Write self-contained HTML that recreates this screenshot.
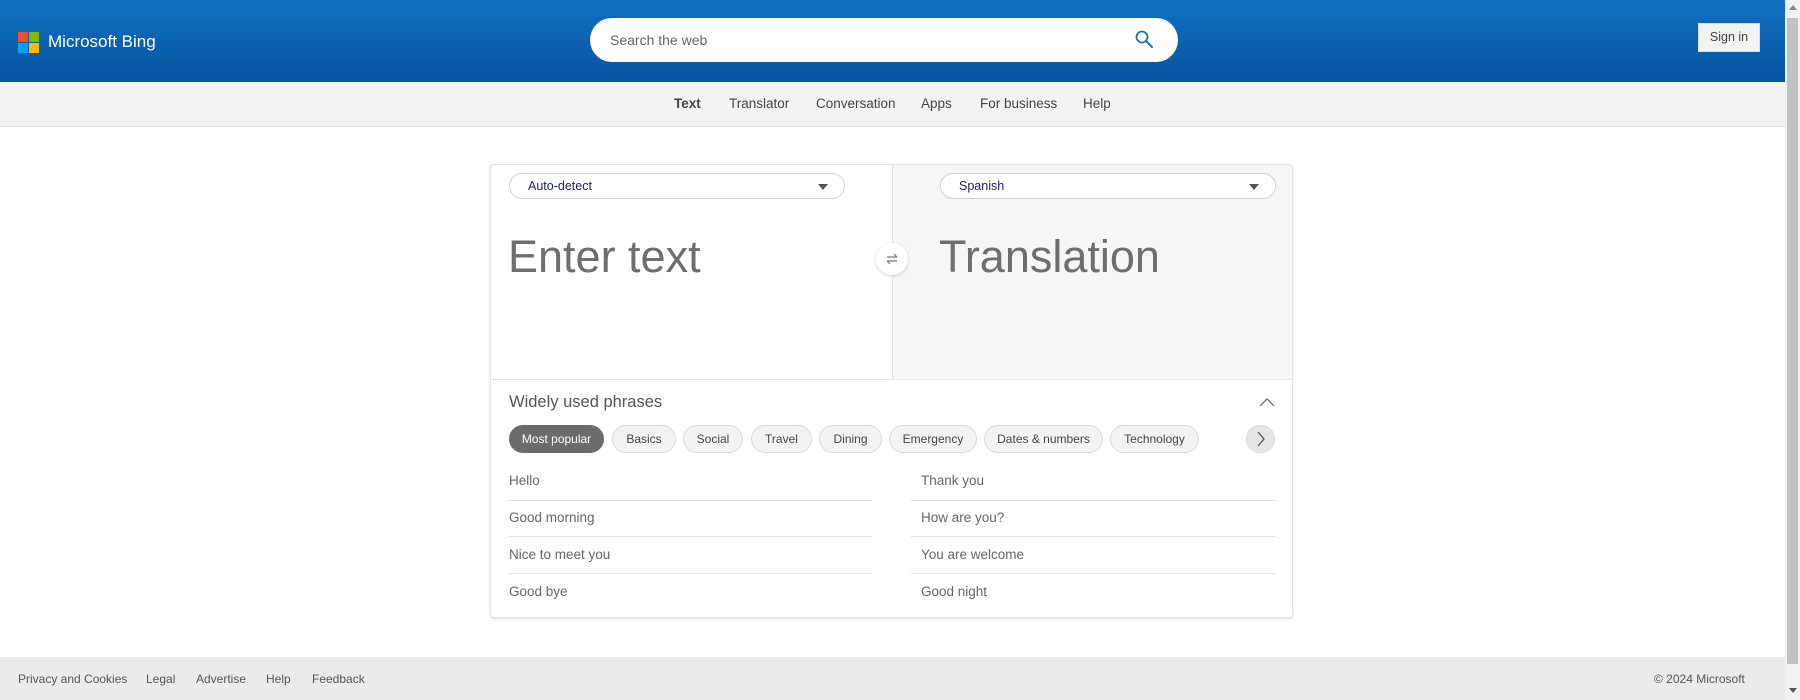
<!DOCTYPE html>
<html><head><meta charset="utf-8"><style>
*{box-sizing:border-box;margin:0;padding:0}
body{width:1800px;height:700px;overflow:hidden;font-family:"Liberation Sans",Arial,sans-serif;background:#fff;position:relative}
.abs{position:absolute}
#hdr{left:0;top:0;width:1785px;height:82px;background:linear-gradient(#1170c2,#0654a0)}
#nav{left:0;top:82px;width:1785px;height:45px;background:#f3f3f3;border-bottom:1px solid #e2e2e2}
.nav{top:96px;font-size:13.5px;color:#444}
#card{left:490px;top:164px;width:803px;height:454px;border:1px solid #e3e3e3;border-radius:4px;box-shadow:0 1px 3px rgba(0,0,0,.12);background:#fff;overflow:hidden}
.dd{height:26px;border:1px solid #d2d2d2;border-radius:13px;background:#fff;font-size:12.5px;color:#1e1e6e;padding:5px 0 0 18px}
.tri{position:absolute;right:16px;top:10px;width:0;height:0;border-left:5px solid transparent;border-right:5px solid transparent;border-top:6px solid #555}
.big{font-size:45px;color:#6e6e6e}
.pill{top:425px;height:28px;border:1px solid #d8d8d8;border-radius:14px;background:#f3f3f3;font-size:12px;color:#444;text-align:center;line-height:26px}
.ph{font-size:13.5px;color:#666}
.sep{height:1px;background:#e3e3e3}
.ft{top:672px;font-size:12px;color:#555}
</style></head><body>
<div id="hdr" class="abs"></div>
<div class="abs" style="left:18px;top:32px;width:10px;height:10px;background:#f25022"></div>
<div class="abs" style="left:29px;top:32px;width:10px;height:10px;background:#7fba00"></div>
<div class="abs" style="left:18px;top:43px;width:10px;height:10px;background:#00a4ef"></div>
<div class="abs" style="left:29px;top:43px;width:10px;height:10px;background:#ffb900"></div>
<div class="abs" style="left:48px;top:32px;font-size:17px;color:#fff">Microsoft Bing</div>
<div class="abs" style="left:590px;top:18px;width:588px;height:44px;background:#fff;border-radius:22px"></div>
<div class="abs" style="left:610px;top:32px;font-size:14px;color:#666">Search the web</div>
<svg class="abs" style="left:1134px;top:29px" width="22" height="22" viewBox="0 0 22 22"><circle cx="8" cy="8" r="5.5" fill="none" stroke="#1a6fb5" stroke-width="1.8"/><path d="M12 12l6 6" stroke="#1a6fb5" stroke-width="2" stroke-linecap="round"/></svg>
<div class="abs" style="left:1698px;top:23px;width:62px;height:29px;background:#f3f3f3;border:1px solid #dcdcdc;font-size:12.5px;color:#444;text-align:center;line-height:27px">Sign in</div>
<div class="abs" style="left:1785px;top:0;width:15px;height:700px;background:#f1f1f1"></div>
<div class="abs" style="left:1787px;top:18px;width:11px;height:646px;background:#c1c1c1"></div>
<div class="abs" style="left:1789px;top:5px;width:0;height:0;border-left:4px solid transparent;border-right:4px solid transparent;border-bottom:5px solid #888"></div>
<div class="abs" style="left:1789px;top:688px;width:0;height:0;border-left:4px solid transparent;border-right:4px solid transparent;border-top:5px solid #555"></div>

<div id="nav" class="abs"></div>
<div class="abs nav" style="left:674px;font-weight:bold">Text</div>
<div class="abs nav" style="left:729px">Translator</div>
<div class="abs nav" style="left:816px">Conversation</div>
<div class="abs nav" style="left:921px">Apps</div>
<div class="abs nav" style="left:980px">For business</div>
<div class="abs nav" style="left:1083px">Help</div>

<div id="card" class="abs">
 <div class="abs" style="left:401px;top:0;width:402px;height:214px;background:#f6f6f6;border-left:1px solid #e6e6e6"></div>
 <div class="abs" style="left:0;top:214px;width:803px;height:1px;background:#e6e6e6"></div>
 <div class="abs dd" style="left:18px;top:8px;width:336px">Auto-detect<span class="tri"></span></div>
 <div class="abs dd" style="left:449px;top:8px;width:336px">Spanish<span class="tri"></span></div>
 <div class="abs big" style="left:17px;top:66px">Enter text</div>
 <div class="abs big" style="left:448px;top:66px">Translation</div>
 <div class="abs" style="left:385px;top:78px;width:32px;height:32px;border-radius:50%;background:#fff;box-shadow:0 1px 3px rgba(0,0,0,.18)"></div>
 <svg class="abs" style="left:391px;top:84px" width="20" height="20" viewBox="0 0 20 20"><path d="M5 8h10M12 5l3 3M15 12H5M8 15l-3-3" fill="none" stroke="#777" stroke-width="1.2"/></svg>
 <div class="abs" style="left:18px;top:228px;font-size:16.5px;color:#555">Widely used phrases</div>
 <svg class="abs" style="left:768px;top:231px" width="16" height="12" viewBox="0 0 16 12"><path d="M1 10L8 3l7 7" fill="none" stroke="#666" stroke-width="1.2"/></svg>
</div>
<div class="abs pill" style="left:509px;width:95px;background:#6b6b6b;color:#fff;border-color:#6b6b6b">Most popular</div>
<div class="abs pill" style="left:612px;width:64px">Basics</div>
<div class="abs pill" style="left:683px;width:60px">Social</div>
<div class="abs pill" style="left:751px;width:61px">Travel</div>
<div class="abs pill" style="left:819px;width:63px">Dining</div>
<div class="abs pill" style="left:889px;width:88px">Emergency</div>
<div class="abs pill" style="left:984px;width:119px">Dates &amp; numbers</div>
<div class="abs pill" style="left:1110px;width:89px">Technology</div>
<div class="abs pill" style="left:1246px;width:29px;background:#e6e6e6"></div>
<svg class="abs" style="left:1254px;top:430px" width="14" height="18" viewBox="0 0 14 18"><path d="M4 2l6 7-6 7" fill="none" stroke="#555" stroke-width="1.3"/></svg>

<div class="abs ph" style="left:509px;top:473px">Hello</div>
<div class="abs ph" style="left:509px;top:510px">Good morning</div>
<div class="abs ph" style="left:509px;top:547px">Nice to meet you</div>
<div class="abs ph" style="left:509px;top:584px">Good bye</div>
<div class="abs ph" style="left:921px;top:473px">Thank you</div>
<div class="abs ph" style="left:921px;top:510px">How are you?</div>
<div class="abs ph" style="left:921px;top:547px">You are welcome</div>
<div class="abs ph" style="left:921px;top:584px">Good night</div>
<div class="abs sep" style="left:509px;top:500px;width:363px"></div>
<div class="abs sep" style="left:509px;top:536px;width:363px"></div>
<div class="abs sep" style="left:509px;top:573px;width:363px"></div>
<div class="abs sep" style="left:911px;top:500px;width:364px"></div>
<div class="abs sep" style="left:911px;top:536px;width:364px"></div>
<div class="abs sep" style="left:911px;top:573px;width:364px"></div>

<div class="abs" style="left:0;top:657px;width:1785px;height:43px;background:#ebebeb"></div>
<div class="abs ft" style="left:18px">Privacy and Cookies</div>
<div class="abs ft" style="left:146px">Legal</div>
<div class="abs ft" style="left:196px">Advertise</div>
<div class="abs ft" style="left:266px">Help</div>
<div class="abs ft" style="left:312px">Feedback</div>
<div class="abs ft" style="left:1654px">© 2024 Microsoft</div>
</body></html>
